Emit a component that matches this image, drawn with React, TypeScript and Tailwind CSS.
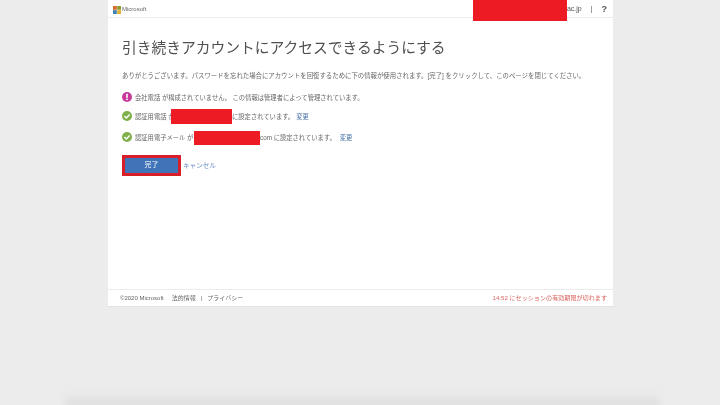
const FONT = 'font-["Liberation_Sans","Noto_Sans_CJK_JP",sans-serif]';

function MsLogo() {
  return (
    <svg width="8" height="8" viewBox="0 0 8 8">
      <rect width="3.8" height="3.8" fill="#d8682c" />
      <rect x="4.2" width="3.8" height="3.8" fill="#8a9a2c" />
      <rect y="4.2" width="3.8" height="3.8" fill="#3a7fb0" />
      <rect x="4.2" y="4.2" width="3.8" height="3.8" fill="#e0b030" />
    </svg>
  );
}

function AlertIcon() {
  return (
    <svg width="10" height="10" viewBox="0 0 10 10" className="shrink-0 mb-[2px]">
      <circle cx="5" cy="5" r="5" fill="#c8399a" />
      <rect x="4.2" y="1.8" width="1.6" height="4" fill="#fff" />
      <rect x="4.2" y="6.6" width="1.6" height="1.5" fill="#fff" />
    </svg>
  );
}

function CheckIcon() {
  return (
    <svg width="10" height="10" viewBox="0 0 10 10" className="shrink-0 mb-[2px]">
      <circle cx="5" cy="5" r="5" fill="#7fb04a" />
      <path d="M2.4 5.1 L4.3 7 L7.7 3.4" fill="none" stroke="#fff" strokeWidth="1.4" />
    </svg>
  );
}

export default function App() {
  return (
    <div className={`relative w-[720px] h-[405px] overflow-hidden bg-[#ececec] ${FONT}`}>
      <div className="ml-[108px] w-[505px] h-[307px] bg-white flex flex-col border-b border-[#e2e2e2] blur-[0.35px]">
        {/* Header */}
        <div className="h-[18px] shrink-0 border-b border-[#ececec] flex items-center justify-between pt-[2px] pl-[5px] pr-[6px]">
          <div className="flex items-center gap-[1px]">
            <MsLogo />
            <span className="text-[6px] text-[#666]">Microsoft</span>
          </div>
          <div className="flex items-center text-[#555]">
            <span className="text-[7px]">ac.jp</span>
            <span className="text-[7px] ml-[9px]">|</span>
            <span className="text-[9px] font-bold ml-[9px]">?</span>
          </div>
        </div>

        {/* Content */}
        <div className="flex-1 pl-[14px] pt-[20px]">
          <h1 className="text-[14.75px] leading-[20px] text-[#4f4f4f] whitespace-nowrap">
            引き続きアカウントにアクセスできるようにする
          </h1>
          <p className="mt-[13px] text-[6.4px] leading-[10px] text-[#666] whitespace-nowrap">
            ありがとうございます。パスワードを忘れた場合にアカウントを回復するために下の情報が使用されます。[完了] をクリックして、このページを閉じてください。
          </p>
          <div className="mt-[11px] flex items-center h-[12px] whitespace-nowrap text-[6.3px] text-[#666]">
            <AlertIcon />
            <span className="ml-[3px]">会社電話 が構成されていません。 この情報は管理者によって管理されています。</span>
          </div>
          <div className="mt-[7px] flex items-center h-[12px] whitespace-nowrap text-[6.3px] text-[#666]">
            <CheckIcon />
            <span className="ml-[3px] w-[36px]">認証用電話 が</span>
            <span className="w-[61px] shrink-0" />
            <span>に設定されています。</span>
            <span className="ml-[2px] text-[#4a72a8]">変更</span>
          </div>
          <div className="mt-[9px] flex items-center h-[12px] whitespace-nowrap text-[6.3px] text-[#666]">
            <CheckIcon />
            <span className="ml-[3px] w-[59px]">認証用電子メール が</span>
            <span className="w-[66px] shrink-0" />
            <span>com に設定されています。</span>
            <span className="ml-[4px] text-[#4a72a8]">変更</span>
          </div>
          <div className="mt-[14px] flex items-center">
            <button className="w-[53px] h-[15px] ml-[3px] bg-[#3f74b8] text-white text-[7px] outline-[3px] outline-[#d81e28]">
              完了
            </button>
            <span className="ml-[5px] text-[6.6px] text-[#6a8cc0]">キャンセル</span>
          </div>
        </div>

        {/* Footer */}
        <div className="h-[17px] shrink-0 border-t border-[#ececec] flex items-center justify-between pl-[12px] pr-[6px] text-[6px] text-[#666]">
          <div className="flex items-center whitespace-nowrap">
            <span>©2020 Microsoft</span>
            <span className="ml-[8px]">法的情報</span>
            <span className="ml-[5px]">|</span>
            <span className="ml-[5px]">プライバシー</span>
          </div>
          <span className="text-[#d9655f] text-[6.1px] whitespace-nowrap">14:52 にセッションの有効期限が切れます</span>
        </div>
      </div>

      {/* Redaction marks pasted over the capture */}
      <div className="absolute left-[473px] top-0 w-[94px] h-[21px] bg-[#ed1c24]" />
      <div className="absolute left-[171px] top-[109px] w-[61px] h-[15px] bg-[#ed1c24]" />
      <div className="absolute left-[194px] top-[131px] w-[66px] h-[14px] bg-[#ed1c24]" />

      {/* Bottom shadow */}
      <div className="absolute left-[65px] -bottom-[3px] w-[595px] h-[17px] bg-gradient-to-b from-[#ececec] to-[#dcdcdc] blur-[3px]" />
    </div>
  );
}
